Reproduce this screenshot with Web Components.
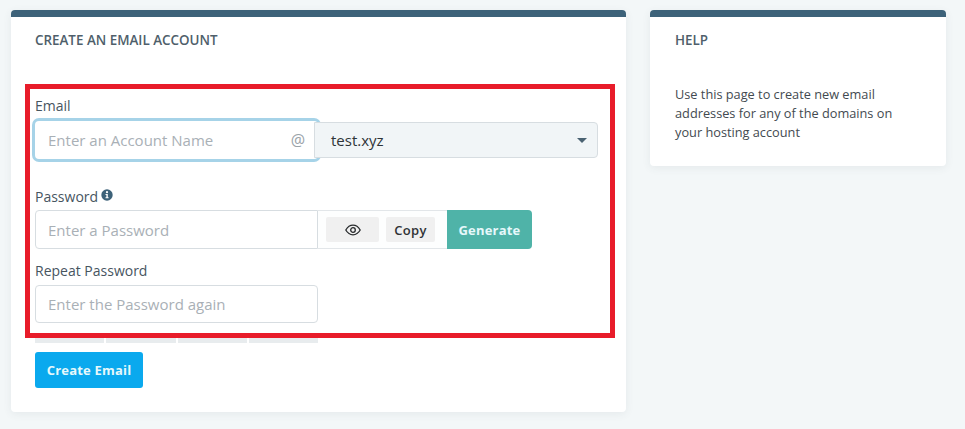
<!DOCTYPE html>
<html>
<head>
<meta charset="utf-8">
<title>Create an email account</title>
<style>
  html, body { margin: 0; padding: 0; height: 429px; overflow: hidden; background: #f3f7f8; }
  body { font-family: "Open Sans", "Liberation Sans", sans-serif; color: #3f4d59; }
</style>
</head>
<body>
<email-page>
  <panel-card slot="main" heading="Create an Email Account" style="width:615px;height:402px;--body-top:47px;--pad-x:24px">
    <form-label>Email</form-label>
    <email-field></email-field>
    <form-label style="margin-top:28px">Password <info-icon></info-icon></form-label>
    <password-field></password-field>
    <form-label style="margin-top:12px">Repeat Password</form-label>
    <text-field placeholder="Enter the Password again"></text-field>
    <strength-meter></strength-meter>
    <action-button style="margin-top:9px;--btn-bg:#0aa9ee;--btn-w:108px;--btn-h:36px">Create Email</action-button>
  </panel-card>
  <panel-card slot="side" heading="Help" style="width:296px;height:156px;--body-top:36px;--pad-x:25px">
    <p style="margin:0;font-size:12.75px;line-height:19px;color:#434a50;width:240px">Use this page to create new email addresses for any of the domains on your hosting account</p>
  </panel-card>
</email-page>
<red-outline></red-outline>

<script>
  class EmailPage extends HTMLElement {
    constructor() {
      super();
      this.attachShadow({ mode: 'open' }).innerHTML = `
        <style>
          :host { display: flex; gap: 24px; align-items: flex-start; padding: 10px 0 0 11px; }
        </style>
        <slot name="main"></slot>
        <slot name="side"></slot>
      `;
    }
  }
  customElements.define('email-page', EmailPage);

  class PanelCard extends HTMLElement {
    constructor() {
      super();
      this.attachShadow({ mode: 'open' }).innerHTML = `
        <style>
          :host {
            display: block;
            box-sizing: border-box;
            background: #fff;
            border-top: 7px solid #3d6279;
            border-radius: 4px;
            box-shadow: 0 2px 8px rgba(60, 80, 90, 0.08);
          }
          h2 {
            margin: 0;
            padding: 14px var(--pad-x, 24px) 0;
            font-size: 13.4px;
            line-height: 18px;
            font-weight: 600;
            color: #4f5f6b;
            text-transform: uppercase;
          }
          .body { padding: var(--body-top, 38px) var(--pad-x, 24px) 0; }
        </style>
        <h2></h2>
        <div class="body"><slot></slot></div>
      `;
    }
    connectedCallback() {
      this.shadowRoot.querySelector('h2').textContent = this.getAttribute('heading');
    }
  }
  customElements.define('panel-card', PanelCard);

  class FormLabel extends HTMLElement {
    constructor() {
      super();
      this.attachShadow({ mode: 'open' }).innerHTML = `
        <style>
          :host { display: block; font-size: 14px; line-height: 19px; color: #47555f; }
        </style>
        <slot></slot>
      `;
    }
  }
  customElements.define('form-label', FormLabel);

  class InfoIcon extends HTMLElement {
    constructor() {
      super();
      this.attachShadow({ mode: 'open' }).innerHTML = `
        <style>
          :host { display: inline-block; width: 12px; height: 12px; margin-left: -1px; vertical-align: 1px; }
          svg { display: block; }
        </style>
        <svg width="12" height="12" viewBox="0 0 12 12">
          <circle cx="6" cy="6" r="5.7" fill="#3d6279"/>
          <circle cx="6" cy="3.2" r="1.1" fill="#fff"/>
          <path d="M4.500 5h2.300v3.200h.8v1H4.500v-1h.9V6h-.9z" fill="#fff"/>
        </svg>
      `;
    }
  }
  customElements.define('info-icon', InfoIcon);

  class TextField extends HTMLElement {
    constructor() {
      super();
      this.attachShadow({ mode: 'open' }).innerHTML = `
        <style>
          :host {
            display: block;
            box-sizing: border-box;
            width: 283px;
            height: 38px;
            margin-top: 5px;
            padding: 0 12px;
            background: #fff;
            border: 1px solid #d7dde1;
            border-radius: 4px;
            font-size: 15px;
            line-height: 37px;
            color: #a9b0b6;
          }
        </style>
        <span></span>
      `;
    }
    connectedCallback() {
      this.shadowRoot.querySelector('span').textContent = this.getAttribute('placeholder');
    }
  }
  customElements.define('text-field', TextField);

  class EmailField extends HTMLElement {
    constructor() {
      super();
      this.attachShadow({ mode: 'open' }).innerHTML = `
        <style>
          :host { display: flex; align-items: center; width: 563px; height: 38px; margin-top: 6px; font-size: 15px; }
          .name {
            box-sizing: border-box;
            flex: none;
            display: flex;
            justify-content: space-between;
            align-items: center;
            width: 283px;
            height: 38px;
            margin-right: -4px;
            padding: 0 12px 0 13px;
            background: #fff;
            border-radius: 4px;
            box-shadow: 0 0 0 3px #a6d3e8;
            color: #a9b0b6;
          }
          .domain {
            position: relative;
            box-sizing: border-box;
            flex: 1;
            display: flex;
            justify-content: space-between;
            align-items: center;
            height: 36px;
            padding: 0 10px 0 16px;
            background: #f1f5f7;
            border: 1px solid #d7dde1;
            border-radius: 0 4px 4px 0;
            color: #2e3438;
          }
          .caret { width: 0; height: 0; border: 5px solid transparent; border-top: 5px solid #4a6272; border-bottom: 0; }
          .at { font-size: 16px; color: #9aa3a9; margin-right: 1px; }
        </style>
        <div class="name"><span>Enter an Account Name</span><span class="at">@</span></div>
        <div class="domain"><span>test.xyz</span><span class="caret"></span></div>
      `;
    }
  }
  customElements.define('email-field', EmailField);

  class PasswordField extends HTMLElement {
    constructor() {
      super();
      this.attachShadow({ mode: 'open' }).innerHTML = `
        <style>
          :host { display: flex; width: 497px; height: 39px; margin-top: 4px; }
          .input {
            box-sizing: border-box;
            width: 283px;
            padding: 0 12px;
            background: #fff;
            border: 1px solid #d7dde1;
            border-radius: 4px 0 0 4px;
            font-size: 15px;
            line-height: 38px;
            color: #a9b0b6;
          }
          .tools {
            box-sizing: border-box;
            display: flex;
            align-items: center;
            gap: 7px;
            width: 129px;
            padding-left: 8px;
            border: solid #e2e6e9;
            border-width: 1px 0;
            background: #fdfefe;
          }
          .tool {
            display: flex;
            align-items: center;
            justify-content: center;
            height: 25px;
            background: #f0f0f0;
            border-radius: 2px;
            font-size: 13px;
            font-weight: 600;
            color: #2f3336;
            letter-spacing: 0.3px;
          }
          .eye { width: 53px; }
          .copy { width: 49px; }
          svg { display: block; }
        </style>
        <div class="input">Enter a Password</div>
        <div class="tools">
          <div class="tool eye">
            <svg width="16" height="12" viewBox="0 0 16 12" fill="none" stroke="#26292b" stroke-width="1.3">
              <path d="M.8 6C2.600 2.900 5 1.200 8 1.200S13.400 2.900 15.200 6C13.400 9.100 11 10.800 8 10.800S2.600 9.100.8 6z"/>
              <circle cx="8" cy="6" r="2.300"/>
            </svg>
          </div>
          <div class="tool copy">Copy</div>
        </div>
        <action-button style="--btn-bg:#4fb3a8;--btn-w:85px;--btn-h:39px;--btn-radius:0 4px 4px 0">Generate</action-button>
      `;
    }
  }
  customElements.define('password-field', PasswordField);

  class StrengthMeter extends HTMLElement {
    constructor() {
      super();
      this.attachShadow({ mode: 'open' }).innerHTML = `
        <style>
          :host { display: flex; gap: 2px; width: 283px; height: 5px; margin-top: 15px; }
          i { flex: 1; background: #e8ecee; }
        </style>
        <i></i><i></i><i></i><i></i>
      `;
    }
  }
  customElements.define('strength-meter', StrengthMeter);

  class ActionButton extends HTMLElement {
    constructor() {
      super();
      this.attachShadow({ mode: 'open' }).innerHTML = `
        <style>
          :host {
            display: flex;
            align-items: center;
            justify-content: center;
            box-sizing: border-box;
            width: var(--btn-w, 100px);
            height: var(--btn-h, 36px);
            background: var(--btn-bg, #0aa9ee);
            border-radius: var(--btn-radius, 3px);
            font-size: 13px;
            font-weight: 700;
            color: #e6f8fb;
            letter-spacing: 0.2px;
          }
        </style>
        <slot></slot>
      `;
    }
  }
  customElements.define('action-button', ActionButton);

  // annotation drawn on top of the screenshot, not part of the form flow
  class RedOutline extends HTMLElement {
    constructor() {
      super();
      this.attachShadow({ mode: 'open' }).innerHTML = `
        <style>
          :host {
            position: absolute;
            left: 25px;
            top: 84px;
            box-sizing: border-box;
            width: 590px;
            height: 254px;
            border: 5px solid #e81c2a;
            pointer-events: none;
          }
        </style>
      `;
    }
  }
  customElements.define('red-outline', RedOutline);
</script>
</body>
</html>
